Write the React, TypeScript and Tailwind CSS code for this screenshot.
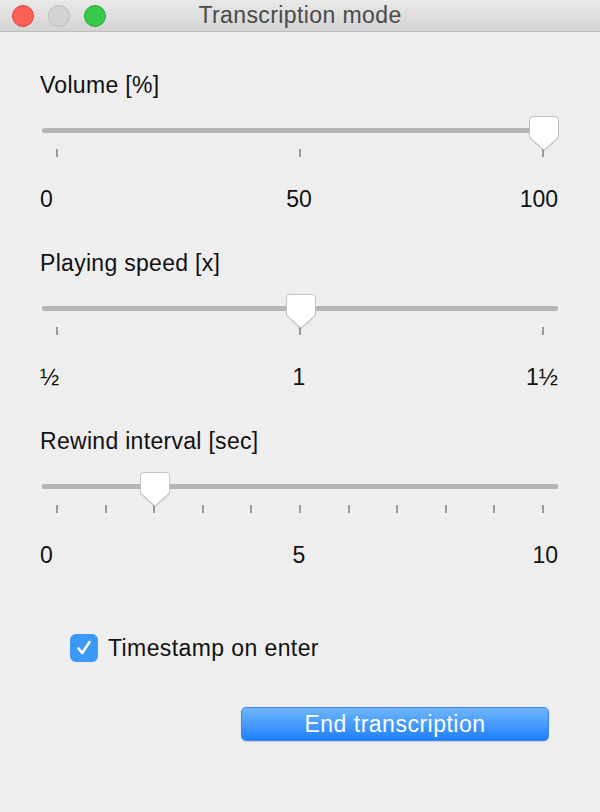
import React from "react";

const font = { fontFamily: '"Liberation Sans", Arial, sans-serif' };

function Thumb({ left }: { left: number }) {
  return (
    <svg
      className="absolute top-[2px]"
      style={{ left }}
      width="32"
      height="37"
      viewBox="-1 -1 32 37"
    >
      <defs>
        <filter id="sh" x="-20%" y="-20%" width="140%" height="140%">
          <feDropShadow dx="0" dy="0.6" stdDeviation="0.6" floodColor="#000" floodOpacity="0.25" />
        </filter>
      </defs>
      <path
        d="M4 0.5 H26 Q29.5 0.5 29.5 4 V21 L15 34 L0.5 21 V4 Q0.5 0.5 4 0.5 Z"
        fill="#ffffff"
        stroke="#c4c4c4"
        strokeWidth="1"
        filter="url(#sh)"
      />
    </svg>
  );
}

function Slider({
  label,
  ticks,
  thumbLeft,
  labels,
}: {
  label: string;
  ticks: number;
  thumbLeft: number;
  labels: [string, string, string];
}) {
  return (
    <div className="flex flex-col">
      <div className="h-[24px] leading-[24px] text-[23px] tracking-[0.3px] text-[#111] pl-[40px]">{label}</div>
      <div className="relative ml-[42px] w-[516px] h-[48px] mt-[16px]">
        <div className="mt-[15px] h-[5px] rounded-full bg-[#b5b5b5]" />
        <div className="flex justify-between px-[14px] mt-[16px]">
          {Array.from({ length: ticks }).map((_, i) => (
            <div key={i} className="w-[2px] h-[8px] bg-[#9a9a9a]" />
          ))}
        </div>
        <Thumb left={thumbLeft} />
      </div>
      <div className="grid grid-cols-3 ml-[40px] w-[518px] mt-[26px] h-[24px] leading-[24px] text-[23px] text-[#111]">
        <div className="text-left">{labels[0]}</div>
        <div className="text-center">{labels[1]}</div>
        <div className="text-right">{labels[2]}</div>
      </div>
    </div>
  );
}

export default function App() {
  return (
    <div className="w-[600px] h-[812px] bg-[#eeeeee] overflow-hidden" style={font}>
      <div className="relative h-[32px] bg-gradient-to-b from-[#e9e9e9] to-[#d4d4d4] border-b border-[#bcbcbc] flex items-center">
        <div className="flex items-center gap-[14px] pl-[12px]">
          <div className="w-[22px] h-[22px] rounded-full bg-[#fc5f58] border border-[#e0443e]" />
          <div className="w-[22px] h-[22px] rounded-full bg-[#d3d3d3] border border-[#bdbdbd]" />
          <div className="w-[22px] h-[22px] rounded-full bg-[#35c94a] border border-[#27aa35]" />
        </div>
        <div className="absolute inset-0 flex items-center justify-center text-[23px] tracking-[0.4px] text-[#4a4a4a] pointer-events-none">
          Transcription mode
        </div>
      </div>

      <div className="flex flex-col gap-[40px] pt-[41px]">
        <Slider label="Volume [%]" ticks={3} thumbLeft={486} labels={["0", "50", "100"]} />
        <Slider label="Playing speed [x]" ticks={3} thumbLeft={243} labels={["½", "1", "1½"]} />
        <Slider label="Rewind interval [sec]" ticks={11} thumbLeft={97} labels={["0", "5", "10"]} />
      </div>

      <div className="flex items-center pl-[70px] mt-[67px]">
        <div className="w-[28px] h-[28px] rounded-[6px] bg-[#3d97f7] flex items-center justify-center">
          <svg width="20" height="20" viewBox="0 0 20 20">
            <path d="M4.5 10.5 L8.3 15 L15.5 4" fill="none" stroke="#fff" strokeWidth="2.6" strokeLinecap="round" strokeLinejoin="round" />
          </svg>
        </div>
        <div className="ml-[10px] text-[23px] tracking-[0.4px] text-[#111] leading-[24px]">Timestamp on enter</div>
      </div>

      <div className="flex justify-start pl-[241px] mt-[45px]">
        <button className="w-[308px] h-[34px] rounded-[5px] bg-gradient-to-b from-[#6eb5fb] to-[#1b7ffb] border border-[#3b87ee] text-white text-[23px] tracking-[0.5px] leading-[32px] shadow-[0_1px_1px_rgba(0,0,0,0.15)]">
          End transcription
        </button>
      </div>
    </div>
  );
}
